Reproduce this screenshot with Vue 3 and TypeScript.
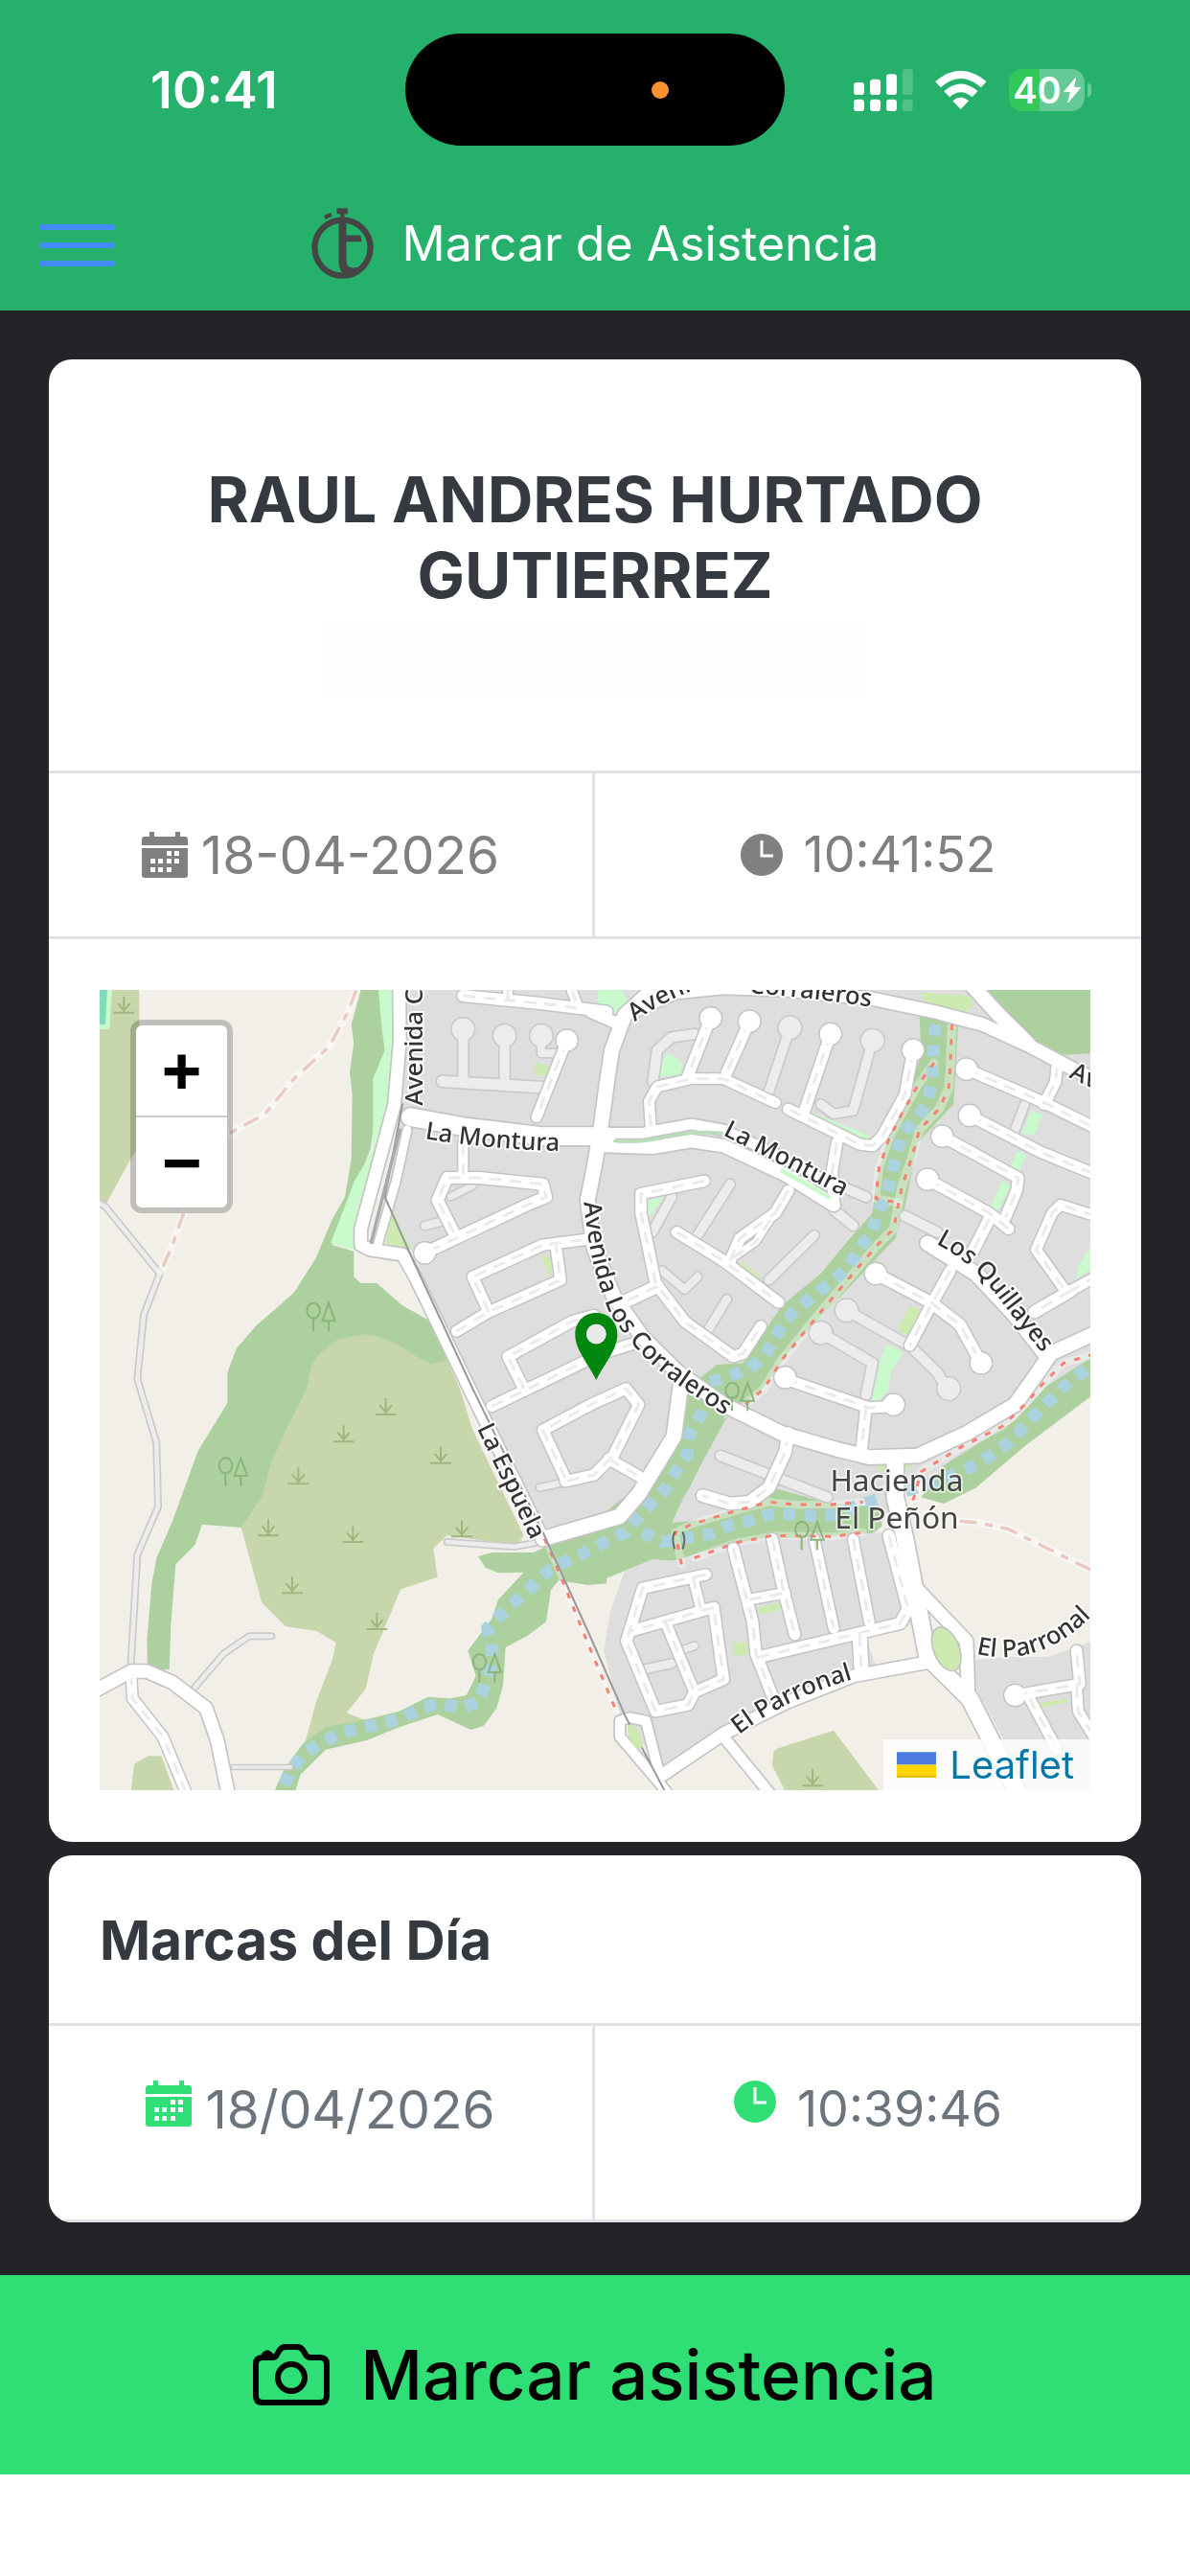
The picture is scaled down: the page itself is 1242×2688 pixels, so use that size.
<script setup lang="ts">
import { ref } from 'vue'

type Tile = 'nw' | 'ne' | 'sw' | 'se'
type Line = [tile: Tile, width: number, points: string]
type Area = [tile: Tile, fill: string, points: string]
type Spot = [tile: Tile, x: number, y: number]

const employee = 'RAUL ANDRES HURTADO GUTIERREZ'
const today = ref('18-04-2026')
const clock = ref('10:41:52')
const marks = ref([{ date: '18/04/2026', time: '10:39:46' }])

// The map is described in four tiles, each with its own origin.
const origin: Record<Tile, string> = {
  nw: 'translate(0 0)',
  ne: 'translate(1560 0) scale(1.014 1)',
  sw: 'translate(0 1260)',
  se: 'translate(1560 1260) scale(1.014 1)',
}

const forest = '#add19e'
const scrub = '#c8d7ab'
const park = '#c8facc'
const grass = '#cdebb0'
const homes = '#dedede'
const land = '#f2efe9'

const areas: Area[] = [
  ['nw', homes, '935,42 3114,42 3114,1230 2960,1370 2620,1560 2500,1640 2440,1750 1860,1840 1400,1760 1000,880 900,690 960,430'],
  ['nw', forest, '830,42 800,150 808,210 795,300 803,370 800,570 780,690 740,760 690,880 620,990 500,1095 440,1165 412,1240 412,1335 320,1485 240,1705 190,1820 175,1900 160,2080 162,2170 230,2170 235,2030 250,1840 310,1780 333,1715 455,1725 700,1400 1100,1200 1050,1080 960,1030 880,960 830,960 808,940 808,860 740,840 860,540 905,230 890,42'],
  ['nw', park, '885,42 895,160 905,230 868,320 868,540 810,640 735,835 810,855 950,430 930,42'],
  ['nw', scrub, '455,1725 520,1960 595,2035 690,2048 752,2085 740,2140 690,2270 652,2410 720,2390 860,2335 785,2305 845,2230 870,2120 955,1918 1070,1880 1057,1790 1100,1750 1320,1780 1340,1750 1180,1420 1140,1290 1100,1200 1050,1215 940,1150 880,1125 840,1120 760,1135 700,1180 675,1220 660,1290 600,1410 550,1520 520,1630'],
  ['nw', scrub, '12,42 136,42 136,530 110,570 30,715 12,715'],
  ['nw', park, '12,42 52,42 42,165 12,165'],
  ['nw', '#7fdcb8', '12,42 36,42 30,150 12,150'],
  ['sw', scrub, '120,1205 165,1180 205,1180 245,1289 110,1289'],
  ['sw', forest, '560,1289 590,1220 650,1140 720,1090 850,1065 950,1040 1040,995 1110,1000 1160,990 1190,930 1165,850 1240,750 1260,690 1340,605 1260,607 1220,590 1197,555 1240,543 1370,543 1410,525 1590,450 1600,640 1540,645 1450,630 1425,660 1410,760 1350,805 1283,840 1275,960 1255,1030 1215,1085 1175,1098 1070,1050 950,1090 850,1130 720,1160 640,1240 625,1289'],
  ['se', forest, '0,640 60,615 180,565 260,570 500,500 850,490 890,460 880,400 730,390 550,340 480,390 340,440 240,450 290,340 350,230 410,120 440,60 520,30 -20,460'],
  ['se', forest, '290,0 290,70 250,200 190,330 120,400 0,460 0,560 200,500 300,330 410,100 440,30'],
  ['ne', forest, '1005,120 1010,250 960,380 930,450 900,530 870,650 860,740 790,820 700,930 580,1030 460,1210 380,1215 310,1270 290,1330 440,1330 520,1290 620,1150 800,960 930,820 960,720 1000,520 1110,400 1125,140'],
  ['se', land, '1020,380 1080,390 1180,340 1330,210 1540,50 1540,900 1170,870 1010,650 960,480'],
  ['se', forest, '1540,-70 1400,20 1300,130 1080,270 1010,370 1080,390 1180,340 1330,210 1540,50'],
  ['ne', forest, '1205,42 1540,42 1540,240 1450,245 1340,190 1230,100'],
  ['se', homes, '95,600 180,565 240,570 440,510 900,480 960,520 1010,660 1010,860 800,910 560,1010 210,1220 80,1050 30,850 50,730'],
  ['se', land, '840,810 980,770 1005,865 870,900'],
  ['se', homes, '1170,880 1180,970 1270,1140 1330,1289 1540,1289 1540,820 1400,870 1280,870'],
  ['se', scrub, '570,1155 740,1100 880,1289 590,1289 550,1210 555,1165'],
  ['se', grass, '430,825 475,825 475,865 430,865'],
  ['se', grass, '505,715 575,700 575,725 505,735'],
  ['se', grass, '870,260 990,260 960,290 880,290'],
  ['se', grass, '1370,1015 1460,1000 1465,1012 1375,1030'],
  ['se', park, '870,-20 910,0 910,30 880,70 845,62'],
  ['ne', park, '905,1150 955,1175 915,1240 910,1290 870,1290 880,1210'],
  ['ne', grass, '1010,50 1160,60 1175,90 1150,112 1015,75'],
  ['ne', park, '12,42 85,42 110,90 70,120 12,90'],
  ['ne', park, '205,315 205,280 225,240 270,265 270,305'],
  ['ne', park, '165,700 215,690 170,755'],
  ['ne', park, '670,425 770,465 855,500 840,512 740,475'],
  ['ne', grass, '975,1030 1010,1045 970,1125 938,1105'],
  ['ne', grass, '455,890 520,945 508,955 445,905'],
  ['ne', park, '1350,420 1385,430 1360,495 1320,490'],
  ['ne', park, '1305,545 1335,560 1315,605 1288,595'],
  ['ne', park, '1260,640 1288,655 1245,735 1225,720'],
  ['ne', park, '1540,830 1500,900 1485,950 1540,910'],
  ['nw', grass, '1375,265 1435,290 1410,310 1375,310'],
  ['nw', grass, '930,735 990,855 905,835'],
  ['nw', grass, '1390,870 1430,885 1425,945'],
]

const serviceRoads: Line[] = [
  ['nw', 30, '1150,165 1150,325'],
  ['nw', 30, '1280,185 1280,330'],
  ['nw', 24, '1395,185 1395,240 1440,240'],
  ['nw', 34, '1085,328 1410,348'],
  ['nw', 20, '1110,690 1180,655'],
  ['nw', 24, '1030,780 1090,765'],
  ['ne', 30, '310,180 240,190 195,230 182,330'],
  ['ne', 28, '605,160 540,360'],
  ['ne', 28, '860,200 800,420 740,430 700,400'],
  ['ne', 28, '420,650 320,810'],
  ['ne', 28, '240,690 180,800'],
  ['ne', 28, '680,810 540,950'],
  ['ne', 26, '410,1010 350,1110'],
  ['ne', 24, '320,940 280,980 210,920'],
  ['ne', 30, '960,750 1060,800'],
  ['ne', 30, '740,730 800,780'],
  ['ne', 30, '770,660 840,690'],
  ['ne', 26, '1330,400 1300,480'],
  ['ne', 30, '780,1045 980,1160 1060,1240 1100,1310'],
  ['ne', 30, '700,1115 860,1210 840,1310'],
  ['se', 30, '390,240 720,370'],
  ['se', 26, '150,910 240,890'],
  ['se', 22, '270,850 310,835'],
  ['sw', 20, '1390,340 1460,325'],
  ['sw', 14, '110,890 130,550 195,400 190,200 130,0 150,-200 200,-330 30,-540 12,-550'],
  ['sw', 14, '310,965 400,860 480,805 550,805'],
  ['sw', 10, '430,1215 610,1215'],
  ['sw', 14, '1100,510 1310,525 1390,510'],
]

const streets: Line[] = [
  ['nw', 32, '1475,200 1380,440'],
  ['nw', 36, '1150,60 1400,85 1600,110'],
  ['nw', 30, '1290,42 1290,75'],
  ['nw', 30, '1490,42 1510,95'],
  ['nw', 30, '1150,520 1150,620'],
  ['nw', 36, '1120,800 1070,700 1100,630 1200,630 1400,650 1410,690 1350,715 1030,865'],
  ['nw', 34, '1130,1110 1230,1050 1455,950 1440,840'],
  ['nw', 34, '1230,1050 1180,940 1400,840 1560,820'],
  ['nw', 34, '1340,1289 1290,1190 1490,1080 1560,1060'],
  ['nw', 34, '1240,1345 1500,1220 1570,1185 1680,1150'],
  ['nw', 34, '1470,1570 1400,1420 1550,1340 1660,1290 1700,1340 1620,1500 1560,1560 1470,1580'],
  ['ne', 34, '360,130 290,310'],
  ['ne', 34, '480,140 410,300'],
  ['ne', 34, '730,180 650,420'],
  ['ne', 34, '985,230 960,370 890,500 860,530 820,525 740,485 600,415'],
  ['ne', 32, '175,470 170,390 195,345 300,320 400,320 560,395'],
  ['ne', 34, '750,520 735,610 740,700'],
  ['ne', 34, '340,640 145,680 145,740 190,960 280,1080 430,1190 460,1180 515,1095'],
  ['ne', 34, '255,800 400,890 570,1020'],
  ['ne', 34, '420,890 450,820 560,740 600,670'],
  ['ne', 22, '430,880 500,830 590,690'],
  ['ne', 40, '195,970 90,1020'],
  ['ne', 34, '1150,290 1380,390 1550,475'],
  ['ne', 34, '1160,435 1380,550 1550,620'],
  ['ne', 34, '1075,500 1310,630 1305,670 1270,755'],
  ['ne', 34, '1030,635 1220,740 1280,790'],
  ['ne', 34, '1430,280 1425,330 1390,400'],
  ['ne', 36, '1220,760 1170,860'],
  ['ne', 32, '1550,750 1440,715 1415,740 1365,855 1460,990 1550,940'],
  ['ne', 38, '1470,985 1360,1050'],
  ['ne', 36, '870,930 1040,1020 1130,1090 1195,1210'],
  ['ne', 34, '1100,920 1040,1030 975,1155'],
  ['se', 34, '590,0 850,90 930,85'],
  ['se', 34, '840,90 825,230'],
  ['se', 38, '600,170 590,230 540,340 480,385 420,390 335,365'],
  ['se', 34, '45,250 140,305'],
  ['se', 34, '430,530 490,760 500,860 550,990'],
  ['se', 34, '550,500 580,640 620,800'],
  ['se', 32, '680,500 740,780'],
  ['se', 32, '800,500 850,760'],
  ['se', 36, '910,490 970,720 945,765 510,870'],
  ['se', 32, '480,690 590,670'],
  ['se', 44, '820,800 825,900'],
  ['se', 34, '345,612 150,655 100,820 190,1040 290,1020 310,980 400,940 370,720'],
  ['se', 34, '370,715 110,790'],
  ['se', 30, '305,620 330,720'],
  ['se', 32, '220,760 310,980'],
  ['se', 34, '1300,990 1500,955 1490,850'],
  ['se', 32, '1490,960 1495,1040 1550,1130'],
  ['se', 32, '1345,1000 1430,1160'],
  ['sw', 32, '110,920 115,1000 210,1120 285,1300'],
]

const avenues: Line[] = [
  ['nw', 38, '950,20 952,200 935,400 830,790 830,840 860,855 960,870 1000,940 1170,1290 1400,1760'],
  ['nw', 26, '975,480 940,640 880,850'],
  ['nw', 56, '985,440 1150,470 1400,500 1600,500'],
  ['nw', 46, '1400,1760 1640,1690 1700,1620 1810,1440 1835,1250'],
  ['ne', 40, '30,530 180,535 300,515 400,530 590,620 740,715'],
  ['ne', 32, '30,490 150,490 300,462 400,480 580,565 750,660'],
  ['ne', 44, '180,42 95,120 55,230 40,330 20,480 0,600 -20,700 0,850 60,1000 150,1130 260,1240 400,1340 580,1430 750,1480 850,1505 1000,1500 1150,1430 1300,1340 1370,1240 1410,1180 1550,1115'],
  ['ne', 36, '-10,110 80,150'],
  ['ne', 40, '120,110 250,50 400,35 600,42 860,70 1050,110 1200,150 1350,220 1480,290 1550,325'],
  ['ne', 44, '1160,20 1250,120 1340,210'],
  ['ne', 46, '1030,835 1180,930 1300,1060 1400,1190'],
  ['se', 52, '930,260 930,370 960,500 990,660 1030,870 1160,1000 1310,1300'],
  ['se', 40, '1000,660 1150,820 1155,980'],
  ['se', 38, '1040,885 800,930 600,1010 400,1110 210,1240'],
  ['se', 32, '400,1120 545,1300'],
  ['se', 30, '230,1300 190,1250 80,1120 80,1070 110,1060 160,1070 200,1230'],
  ['sw', 40, '-20,985 110,915 160,915 240,950 345,1030 380,1130 415,1300'],
]

const deadEnds: Spot[] = [
  ['nw', 1475, 200], ['nw', 1030, 865],
  ['ne', 360, 130], ['ne', 480, 140], ['ne', 730, 180], ['ne', 985, 230],
  ['ne', 1150, 290], ['ne', 1160, 435], ['ne', 1075, 500], ['ne', 1030, 635],
  ['ne', 870, 930], ['ne', 590, 1255], ['se', 925, 80], ['se', 1300, 990], ['ne', 1195, 1210],
]
const quietEnds: Spot[] = [
  ['nw', 1150, 165], ['nw', 1280, 185], ['nw', 1395, 185],
  ['ne', 605, 160], ['ne', 860, 200], ['ne', 780, 1045], ['ne', 700, 1115], ['se', 1095, 30],
]

const rivers: Line[] = [
  ['ne', 38, '1055,150 1050,190 1045,320 1030,390 1000,440 955,490 935,550 905,680 875,740 860,800 820,850 785,910 740,950 690,990 640,1030 590,1075 560,1130 525,1190 475,1230 415,1252 355,1272 330,1370 295,1430 288,1495 255,1545 220,1605 175,1650 130,1700 100,1740 50,1760 0,1790 -65,1820 -135,1855 -235,1950 -285,1995 -330,2040 -315,2085 -315,2145 -335,2210 -355,2270 -410,2290 -475,2275 -530,2290 -590,2320 -655,2340 -715,2350 -780,2368 -840,2398 -900,2435 -935,2485 -970,2560'],
  ['se', 38, '150,480 210,510 290,497 360,485 420,458 485,443 545,423 610,423 680,428 740,425 830,390 900,370 1060,320 1110,300 1180,268 1235,233 1285,195 1330,148 1375,97 1425,50 1470,5 1550,-50'],
]

const walkBeds: Line[] = [
  ['ne', 28, '1105,150 1100,280 1095,350 1065,415 1005,480 980,570 950,660 925,790 880,835 820,905 700,1050 580,1200 525,1290 460,1345'],
  ['ne', 26, '1050,270 1000,340 950,430 910,510 880,600 870,695 940,708'],
  ['se', 24, '270,580 250,480 300,455 440,412 540,385 620,393 730,393 830,385'],
  ['se', 24, '310,560 440,512 550,490 740,493 830,480'],
  ['se', 24, '985,380 1010,290 1130,215 1260,148 1330,80 1390,10 1450,-50 1550,-80'],
  ['sw', 18, '1405,500 1440,580 1550,850 1630,1040'],
]

const tracks: Line[] = [
  ['nw', 10, '815,42 790,110 730,220 620,320 530,430 410,495'],
  ['nw', 10, '275,740 240,840 205,920'],
  ['se', 10, '1130,445 1190,450 1280,470 1400,530 1550,605'],
]

const shrubs: Spot[] = [
  ['nw', 88, 90], ['sw', 908, 88], ['sw', 776, 173], ['sw', 1080, 240], ['sw', 634, 305],
  ['sw', 540, 467], ['sw', 805, 487], ['sw', 615, 647], ['sw', 880, 760], ['sw', 1146, 470], ['se', 675, 1250],
]
const groves: Spot[] = [['nw', 705, 1060], ['sw', 430, 285], ['sw', 1225, 900], ['se', 665, 485], ['se', 450, 50]]
</script>

<template>
  <div class="app">
    <header class="top">
      <div class="status">
        <div class="status-time">10:41</div>
        <div class="island"><span class="mic-dot"></span></div>
        <div class="status-icons">
          <svg class="signal" viewBox="153 90 186 132" aria-label="Señal">
            <g fill="#fff">
              <rect x="153" y="132" width="33" height="39" rx="10" /><rect x="204" y="122" width="33" height="49" rx="10" /><rect x="255" y="106" width="33" height="65" rx="10" />
              <rect x="153" y="185" width="33" height="37" rx="10" /><rect x="204" y="185" width="33" height="37" rx="10" /><rect x="255" y="185" width="33" height="37" rx="10" />
            </g>
            <g fill="#fff" opacity=".2"><rect x="305" y="90" width="33" height="81" rx="10" /><rect x="305" y="185" width="33" height="37" rx="10" /></g>
          </svg>
          <svg class="wifi" viewBox="408 94 160 122" aria-label="Wi-Fi" fill="#fff">
            <path d="M408 130Q487 62 567 130L550 148Q487 94 425 148Z" />
            <path d="M435 160Q487 114 540 160L522 178Q487 148 453 178Z" />
            <path d="M462 190Q487 168 512 190L487 216Z" />
          </svg>
          <div class="battery">
            <div class="battery-body">
              <span>40</span>
              <svg viewBox="805 118 56 82" fill="#fff"><path d="M844 120L807 164H828L820 199L860 151H838Z" stroke="#fff" stroke-width="3" stroke-linejoin="round" /></svg>
            </div>
            <i class="battery-tip"></i>
          </div>
        </div>
      </div>
      <nav class="bar">
        <button class="menu" aria-label="Menú"><i></i><i></i><i></i></button>
        <div class="brand">
          <svg class="logo" viewBox="80 54 196 224" fill="#454545" aria-hidden="true">
            <circle cx="178" cy="180" r="88" fill="none" stroke="#454545" stroke-width="19" />
            <path d="M160 55H194V73H184V86H171V73H160Z" />
            <path d="M119 78L141 68L145 80L124 90Z" />
            <path d="M166 92H190V140H235L239 161H190V222Q192 243 212 243Q226 243 235 239L216 266L188 272Q166 252 166 225Z" />
          </svg>
          <h1>Marcar de Asistencia</h1>
        </div>
      </nav>
    </header>

    <main class="content">
      <section class="card">
        <div class="person">
          <h2>{{ employee }}</h2>
          <div class="person-note"></div>
        </div>
        <div class="pair now">
          <div class="cell date">
            <svg class="calendar" viewBox="0 0 48 48" fill="currentColor"><path d="M8 0h5v5h22V0h5v5h5q3 0 3 3v6H0V8q0-3 3-3h5z" /><path fill-rule="evenodd" d="M0 17h48v28q0 3-3 3H3q-3 0-3-3zM26 20v5h5v-5zM34 20v5h5v-5zM9 28v5h5v-5zM17 28v5h5v-5zM26 28v5h5v-5zM34 28v5h5v-5zM9 37v5h5v-5zM17 37v5h5v-5zM26 37v5h5v-5z" /></svg>
            <time>{{ today }}</time>
          </div>
          <div class="cell hour">
            <svg class="clock" viewBox="0 0 44 44" fill="currentColor"><circle cx="22" cy="22" r="22" /><path d="M22 7V23H34" fill="none" stroke="#fff" stroke-width="3" /></svg>
            <time>{{ clock }}</time>
          </div>
        </div>
        <div class="map-wrap">
          <div class="map">
            <svg class="tiles" viewBox="12 42 3102 2505" role="img" aria-label="Mapa de la ubicación">
              <defs>
                <path id="l-avenida" d="M1024 404V-200" />
                <path id="l-montura-w" d="M1030 508Q1240 542 1480 547" />
                <path id="l-montura-e" d="M1962 496Q2170 600 2380 710" />
                <path id="l-corraleros" d="M1528 706Q1545 900 1605 1045Q1690 1190 1840 1290L2040 1420" />
                <path id="l-corraleros-n1" d="M1688 142Q1780 70 1960 10" />
                <path id="l-corraleros-n2" d="M2045 52Q2230 62 2480 104" />
                <path id="l-quillayes" d="M2630 836Q2745 895 2830 1010Q2890 1090 2990 1210" />
                <path id="l-espuela" d="M1193 1414L1380 1800" />
                <path id="l-parronal-w" d="M2014 2374Q2170 2250 2420 2186" />
                <path id="l-parronal-e" d="M2756 2120Q2960 2170 3130 1990" />
                <path id="l-avenida-e" d="M3045 315L3250 410" />
              </defs>
              <rect x="12" y="42" width="3102" height="2505" fill="#f2efe9" />
              <polygon v-for="(a, i) in areas" :key="'a' + i" :transform="origin[a[0]]" :fill="a[1]" :points="a[2]" />
              <g fill="none" stroke-linecap="round" stroke-linejoin="round">
                <polyline v-for="(l, i) in walkBeds" :key="'wb' + i" :transform="origin[l[0]]" :points="l[2]" :stroke-width="l[1]" stroke="#fff" opacity=".35" />
                <g stroke="#aad3df" stroke-linecap="butt" stroke-dasharray="36 29">
                  <polyline v-for="(l, i) in rivers" :key="'r' + i" :transform="origin[l[0]]" :points="l[2]" :stroke-width="l[1]" />
                </g>
                <g stroke="#cacaca">
                  <polyline v-for="(l, i) in serviceRoads" :key="'sc' + i" :transform="origin[l[0]]" :points="l[2]" :stroke-width="l[1] + 10" />
                </g>
                <circle v-for="(s, i) in quietEnds" :key="'q' + i" :transform="origin[s[0]]" :cx="s[1]" :cy="s[2]" r="37" fill="#ececec" stroke="#cacaca" stroke-width="5" />
                <g stroke="#ececec">
                  <polyline v-for="(l, i) in serviceRoads" :key="'sf' + i" :transform="origin[l[0]]" :points="l[2]" :stroke-width="l[1]" />
                </g>
                <g stroke="#c4c4c4">
                  <polyline v-for="(l, i) in streets" :key="'tc' + i" :transform="origin[l[0]]" :points="l[2]" :stroke-width="l[1] + 9" />
                  <polyline v-for="(l, i) in avenues" :key="'ac' + i" :transform="origin[l[0]]" :points="l[2]" :stroke-width="l[1] + 10" />
                </g>
                <circle v-for="(s, i) in deadEnds" :key="'d' + i" :transform="origin[s[0]]" :cx="s[1]" :cy="s[2]" r="35" fill="#fff" stroke="#c4c4c4" stroke-width="5" />
                <g stroke="#fff">
                  <polyline v-for="(l, i) in streets" :key="'tf' + i" :transform="origin[l[0]]" :points="l[2]" :stroke-width="l[1]" />
                </g>
                <g stroke="#ebebeb" stroke-width="9" stroke-dasharray="38 26" stroke-linecap="butt">
                  <polyline v-for="(l, i) in streets" :key="'tm' + i" :transform="origin[l[0]]" :points="l[2]" />
                </g>
                <circle v-for="(s, i) in deadEnds" :key="'df' + i" :transform="origin[s[0]]" :cx="s[1]" :cy="s[2]" r="32" fill="#fff" />
                <g stroke="#fff">
                  <polyline v-for="(l, i) in avenues" :key="'af' + i" :transform="origin[l[0]]" :points="l[2]" :stroke-width="l[1]" />
                </g>
                <g stroke="#fa8072" stroke-linecap="butt" stroke-dasharray="18 28">
                  <polyline v-for="(l, i) in walkBeds" :key="'w' + i" :transform="origin[l[0]]" :points="l[2]" stroke-width="9" />
                </g>
                <g stroke="#fff" opacity=".5">
                  <polyline v-for="(l, i) in tracks" :key="'kb' + i" :transform="origin[l[0]]" :points="l[2]" stroke-width="24" />
                </g>
                <g stroke="#e8c8bf" stroke-dasharray="52 26 24 26" stroke-linecap="butt">
                  <polyline v-for="(l, i) in tracks" :key="'k' + i" :transform="origin[l[0]]" :points="l[2]" :stroke-width="l[1]" />
                </g>
                <path d="M960 400L905 690L985 870L1180 1290L1400 1740L1550 2070L1660 2320L1780 2547" stroke="#999" stroke-width="6" />
                <path d="M952 480L862 832" stroke="#aaa" stroke-width="10" />
                <path d="M1625 515Q1680 520 1750 510Q1860 480 1960 490" stroke="#b8ddb8" stroke-width="10" />
                <path d="M2150 608L2295 690" stroke="#c8facc" stroke-width="14" />
                <path d="M1812 1740q-10 20 0 50M1838 1740q10 20 0 50" stroke="#666" stroke-width="6" />
              </g>
              <ellipse cx="2663" cy="2105" rx="40" ry="72" transform="rotate(-22 2663 2105)" fill="#cdebb0" stroke="#c4c4c4" stroke-width="5" />
              <ellipse cx="1688" cy="2380" rx="18" ry="42" transform="rotate(-25 1688 2380)" fill="#cdebb0" />
              <g fill="none" stroke="#a3b57f" stroke-width="6">
                <g v-for="(s, i) in shrubs" :key="'sh' + i" :transform="origin[s[0]]"><path :transform="`translate(${s[1]} ${s[2]})`" d="M-33 23H33M0 22V-28M0 16L-19 -6M0 16L19 -6" /></g>
              </g>
              <g fill="none" stroke="#8cb57c" stroke-width="6">
                <g v-for="(s, i) in groves" :key="'g' + i" :transform="origin[s[0]]"><path :transform="`translate(${s[1]} ${s[2]})`" d="M-24 50V5M24 50V18M24 -38L4 18H44ZM-24 -38a20 24 0 1 0 1 0Z" /></g>
              </g>
              <g class="labels">
                <text><textPath href="#l-avenida">Avenida Co</textPath></text>
                <text><textPath href="#l-montura-w">La Montura</textPath></text>
                <text><textPath href="#l-montura-e">La Montura</textPath></text>
                <text><textPath href="#l-corraleros">Avenida Los Corraleros</textPath></text>
                <text><textPath href="#l-corraleros-n1">Aveni</textPath></text>
                <text><textPath href="#l-corraleros-n2">Corraleros</textPath></text>
                <text><textPath href="#l-quillayes">Los Quillayes</textPath></text>
                <text><textPath href="#l-espuela">La Espuela</textPath></text>
                <text><textPath href="#l-parronal-w">El Parronal</textPath></text>
                <text><textPath href="#l-parronal-e">El Parronal</textPath></text>
                <text><textPath href="#l-avenida-e">Av</textPath></text>
                <g class="place"><text x="2508" y="1610">Hacienda</text><text x="2508" y="1728">El Peñón</text></g>
              </g>
              <path fill="#00870d" fill-rule="evenodd" d="M1567 1053C1526 1053 1501 1083 1501 1121C1501 1168 1540 1208 1567 1263C1594 1208 1633 1168 1633 1121C1633 1083 1608 1053 1567 1053ZM1567 1088a31 31 0 1 1 0 62a31 31 0 1 1 0-62Z" />
              <circle cx="1567" cy="1119" r="31" fill="#e8e8e8" />
            </svg>
            <div class="zoom">
              <button aria-label="Acercar">+</button>
              <button aria-label="Alejar">−</button>
            </div>
            <a class="credit" href="#leaflet">
              <svg viewBox="0 0 40 26"><path fill="#4c7be1" d="M0 0h40v13H0z" /><path fill="#ffd500" d="M0 13h40v13H0z" /><path fill="#e0bc00" d="M0 24h40v2H0z" /></svg>
              <span>Leaflet</span>
            </a>
          </div>
        </div>
      </section>

      <section class="card">
        <h3>Marcas del Día</h3>
        <div v-for="m in marks" :key="m.time" class="pair past">
          <div class="cell date">
            <svg class="calendar" viewBox="0 0 48 48" fill="#2fdf75"><path d="M8 0h5v5h22V0h5v5h5q3 0 3 3v6H0V8q0-3 3-3h5z" /><path fill-rule="evenodd" d="M0 17h48v28q0 3-3 3H3q-3 0-3-3zM26 20v5h5v-5zM34 20v5h5v-5zM9 28v5h5v-5zM17 28v5h5v-5zM26 28v5h5v-5zM34 28v5h5v-5zM9 37v5h5v-5zM17 37v5h5v-5zM26 37v5h5v-5z" /></svg>
            <time>{{ m.date }}</time>
          </div>
          <div class="cell hour">
            <svg class="clock" viewBox="0 0 44 44" fill="#2fdf75"><circle cx="22" cy="22" r="22" /><path d="M22 7V23H34" fill="none" stroke="#fff" stroke-width="3" /></svg>
            <time>{{ m.time }}</time>
          </div>
        </div>
      </section>
    </main>

    <button class="mark">
      <svg viewBox="0 0 80 64" fill="none" stroke="#000" stroke-width="6" stroke-linejoin="round" stroke-linecap="round"><path d="M10 14H20Q24 14 25 11L28 6Q30 3 34 3H46Q50 3 52 6L55 11Q57 14 60 14H70Q77 14 77 21V54Q77 61 70 61H10Q3 61 3 54V21Q3 14 10 14Z" /><path d="M12 11Q15 8 18 11" /><circle cx="40" cy="35" r="14" /></svg>
      <span>Marcar asistencia</span>
    </button>
  </div>
</template>

<style>
body { margin: 0; background: #fff; }
</style>

<style scoped>
.app { font-family: Inter, "Open Sans", sans-serif; color: #343a40; }
h1, h2, h3 { margin: 0; }
button { border: 0; padding: 0; font: inherit; }
.top { background: #25b16c; padding-top: 35px; }
.status { display: grid; grid-template-columns: 1fr 396px 1fr; align-items: center; height: 117px; color: #fff; }
.status-time { text-align: center; font-size: 54px; line-height: 64px; font-weight: 600; padding-left: 24px; }
.island { height: 117px; background: #000; border-radius: 59px; display: flex; align-items: center; justify-content: flex-end; padding-right: 121px; box-sizing: border-box; }
.mic-dot { width: 18px; height: 18px; border-radius: 50%; background: #ff9230; }
.status-icons { display: flex; align-items: center; padding-left: 72px; gap: 23px; }
.signal { width: 62px; height: 44px; }
.wifi { width: 54px; height: 41px; }
.battery { display: flex; align-items: center; gap: 3px; }
.battery-body { display: flex; align-items: center; justify-content: center; gap: 2px; width: 79px; height: 44px; border-radius: 14px; background: linear-gradient(90deg, #34c759 40%, #66ca98 40%); font-size: 38px; font-weight: 600; line-height: 44px; }
.battery-body svg { width: 18px; height: 28px; }
.battery-tip { width: 4px; height: 14px; border-radius: 0 4px 4px 0; background: #66ca98; }
.bar { position: relative; display: flex; justify-content: center; height: 140px; margin-top: 32px; }
.menu { position: absolute; left: 41px; top: 50px; width: 79px; background: none; display: flex; flex-direction: column; gap: 13px; }
.menu i { height: 6px; border-radius: 2px; background: #428cff; }
.brand { display: flex; align-items: center; gap: 30px; height: 140px; }
.logo { width: 65px; height: 74px; }
h1 { font-size: 50px; line-height: 60px; font-weight: 400; color: #fff; }
.content { background: #232428; padding: 51px 51px 55px; display: flex; flex-direction: column; gap: 14px; }
.card { background: #fff; border-radius: 24px; overflow: hidden; }
.person { padding: 107px 150px 78px; text-align: center; }
h2 { font-size: 66px; line-height: 79px; font-weight: 700; }
.person-note { width: 562px; height: 78px; margin: 8px auto 0; background: #fcfffd; }
.pair { display: grid; grid-template-columns: 1fr 1fr; border-top: 3px solid #dee2e6; border-bottom: 3px solid #dee2e6; }
.pair.now { color: #808080; height: 170px; }
.pair.past { color: #6c757d; height: 202px; }
.cell { display: flex; align-items: center; justify-content: center; }
.date { border-right: 3px solid #dee2e6; font-size: 55px; gap: 14px; }
.hour { font-size: 52px; gap: 22px; }
.past .cell { align-items: flex-start; padding-top: 52px; }
.past svg { margin-top: 5px; }
.cell time { line-height: 70px; }
.calendar { width: 48px; height: 48px; }
.clock { width: 44px; height: 44px; }
.map-wrap { padding: 53px 53px 54px; }
.map { position: relative; overflow: hidden; }
.tiles { display: block; width: 100%; height: auto; }
.labels { font-family: "Noto Sans", sans-serif; font-size: 77px; font-weight: 500; fill: #333; stroke: #fff; stroke-width: 12px; stroke-linejoin: round; paint-order: stroke; }
.place { font-size: 95px; font-weight: 400; text-anchor: middle; fill: #444; stroke-opacity: .6; }
.zoom { position: absolute; left: 32px; top: 31px; width: 95px; border: 6px solid rgba(0, 0, 0, .2); border-radius: 12px; background: #fff; background-clip: padding-box; display: flex; flex-direction: column; }
.zoom button { height: 94px; background: none; color: #000; font-family: "DejaVu Sans", sans-serif; font-weight: 700; font-size: 54px; line-height: 60px; -webkit-text-stroke: 2px #000; }
.zoom button + button { border-top: 2px solid #ccc; height: 96px; }
.credit { position: absolute; right: 0; bottom: 0; display: flex; align-items: center; gap: 14px; padding: 0 17px 0 14px; height: 53px; background: rgba(255, 255, 255, .8); color: #0078a8; font-size: 40px; text-decoration: none; }
.credit svg { width: 41px; height: 27px; }
h3 { padding: 55px 53px 53px; font-size: 57px; line-height: 67px; font-weight: 700; }
.mark { display: flex; align-items: center; justify-content: center; gap: 32px; width: 100%; height: 208px; background: #2fdf75; color: #000; font-size: 71px; font-weight: 500; }
.mark svg { width: 80px; height: 64px; }
</style>
